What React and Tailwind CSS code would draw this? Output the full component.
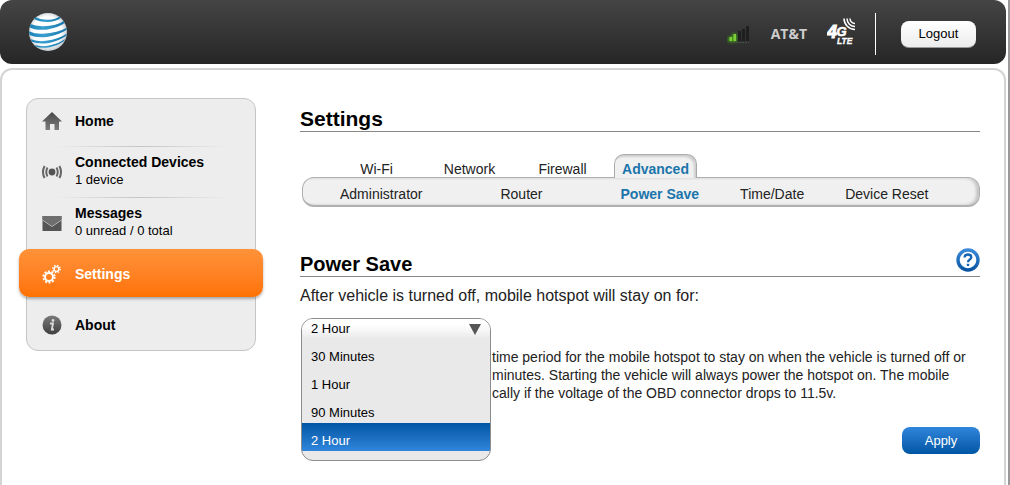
import React, { useState } from 'react';

const mainTabs = ['Wi-Fi', 'Network', 'Firewall', 'Advanced'];

const durations = ['30 Minutes', '1 Hour', '90 Minutes', '2 Hour'];

const Globe = () => (
  <svg width="38" height="38" viewBox="0 0 38 38" aria-hidden="true">
    <defs>
      <radialGradient id="globeFill" cx="48%" cy="48%" r="54%">
        <stop offset="70%" stopColor="#ffffff" />
        <stop offset="100%" stopColor="#bcc4ca" />
      </radialGradient>
      <linearGradient id="globeBand" x1="0" x2="1">
        <stop offset="0" stopColor="#1b7fb5" />
        <stop offset="0.4" stopColor="#3a9fd0" />
        <stop offset="1" stopColor="#1574a8" />
      </linearGradient>
      <clipPath id="globeClip">
        <circle cx="19" cy="19" r="19" />
      </clipPath>
    </defs>
    <circle cx="19" cy="19" r="19" fill="url(#globeFill)" />
    <g clipPath="url(#globeClip)" fill="url(#globeBand)">
      <path d="M6 4Q12 7 19 6.800Q27 6.500 31 3L32.500 4.500Q27 8.800 18 9Q10 9 5 6Z" />
      <path d="M1.500 11Q6 13 13 13.200Q27 13.500 35.500 7.500L36.500 9.500Q29 15 17 16.700Q6 17.500 0 14Z" />
      <path d="M-0.500 18Q6 21.300 14 20.800Q29 20 38 14.500L38 16.500Q30 22 18 24Q7 25.300 0.500 22Z" />
      <path d="M1 26Q8 29 17 27.800Q30 26 38 20.500L37.500 22.500Q30 28 20 30Q10 31.500 3 28.700Z" />
      <path d="M5.500 32Q12 34 20 32.500Q30 30.500 36 26L34.500 28.500Q29 32.500 21 34.200Q13 35.500 8 34Z" />
    </g>
  </svg>
);

const SignalBars = () => (
  <svg width="24" height="20" viewBox="0 0 24 20" aria-hidden="true">
    <defs>
      <filter id="barGlow" x="-60%" y="-60%" width="220%" height="220%">
        <feGaussianBlur stdDeviation="1.500" />
      </filter>
    </defs>
    <path d="M1 17V12H5V9H10V17Z" fill="#3f9a12" filter="url(#barGlow)" />
    <path d="M2.500 16V12H5V16ZM6.500 16V9H9V16Z" fill="#7fcb3a" />
    <path d="M11 16V6H14V16ZM15 16V4H18V16ZM19 16V1H22V16Z" fill="#1f1f1f" />
    <path d="M3 17.500H22" stroke="#465140" strokeDasharray="2 1" />
  </svg>
);

const LteBadge = () => (
  <svg width="30" height="28" viewBox="0 0 30 28" fill="#fff" aria-label="4G LTE">
    <g stroke="#fff" strokeWidth="1.500" fill="none">
      <path d="M17 1.500A11 11 0 0 0 28 12.500" />
      <path d="M20 1.500A8 8 0 0 0 28 9.500" />
      <path d="M23 1.500A5 5 0 0 0 28 6.500" />
    </g>
    <g className="font-['Liberation_Sans',sans-serif] font-bold italic" stroke="#fff">
      <text x="0" y="21" fontSize="18" strokeWidth="1">
        4<tspan x="9.500" y="19" fontSize="13" strokeWidth="0.600">G</tspan>
      </text>
      <text x="10" y="27" fontSize="8.500" strokeWidth="0.300">LTE</text>
    </g>
  </svg>
);

const IconDefs = () => (
  <defs>
    <linearGradient id="menuGray" x1="0" x2="0" y1="0" y2="1">
      <stop offset="0" stopColor="#484848" />
      <stop offset="1" stopColor="#7d7d7d" />
    </linearGradient>
  </defs>
);

const HomeIcon = () => (
  <svg width="20" height="20" viewBox="0 0 20 20" aria-hidden="true">
    <IconDefs />
    <path d="M10 1L20 10.500H17V19H12.500V13H8V19H3.500V10.500H0Z" fill="url(#menuGray)" />
  </svg>
);

const DevicesIcon = () => (
  <svg width="20" height="20" viewBox="0 0 20 20" fill="none" stroke="#666" aria-hidden="true">
    <circle cx="10" cy="10" r="3.400" fill="#555" stroke="none" />
    <path strokeWidth="2" d="M5.500 5.500Q3 10 5.500 14.500M14.500 5.500Q17 10 14.500 14.500" />
    <path strokeWidth="2" d="M2.600 4Q-0.600 10 2.600 16M17.400 4Q20.600 10 17.400 16" />
  </svg>
);

const MailIcon = () => (
  <svg width="20" height="20" viewBox="0 0 20 20" aria-hidden="true">
    <rect x="0.500" y="3" width="19" height="15" rx="0.500" fill="#555" />
    <path d="M0.500 3H19.500V6L10 13L0.500 6Z" fill="#6e6e6e" />
    <path d="M0.500 7L10 13.500L19.500 7" fill="none" stroke="#b8b8b8" />
  </svg>
);

const GearsIcon = () => (
  <svg width="20" height="20" viewBox="0 0 20 20" fill="none" stroke="#fff" aria-hidden="true">
    <circle cx="7" cy="13" r="4" strokeWidth="2" />
    <circle cx="7" cy="13" r="5.700" strokeWidth="1.800" strokeDasharray="2 1.581" />
    <circle cx="14.500" cy="5" r="2.400" strokeWidth="1.400" />
    <circle cx="14.500" cy="5" r="3.700" strokeWidth="1.400" strokeDasharray="1.500 1.406" />
  </svg>
);

const InfoIcon = () => (
  <svg width="20" height="20" viewBox="0 0 20 20" aria-hidden="true">
    <defs>
      <linearGradient id="infoFill" x1="0" x2="0" y1="0" y2="1">
        <stop offset="0" stopColor="#7a7a7a" />
        <stop offset="1" stopColor="#3f3f3f" />
      </linearGradient>
    </defs>
    <circle cx="10" cy="10" r="9.500" fill="url(#infoFill)" />
    <circle cx="11" cy="5.500" r="1.400" fill="#ddd" />
    <path d="M8 8.500H11L9.800 14.500H12" fill="none" stroke="#ddd" strokeWidth="1.800" />
  </svg>
);

const HelpIcon = () => (
  <svg width="24" height="24" viewBox="0 0 24 24" fill="none" aria-hidden="true">
    <defs>
      <linearGradient id="helpRing" x1="0" x2="0" y1="0" y2="1">
        <stop offset="0" stopColor="#3b8ad8" />
        <stop offset="1" stopColor="#0a55a3" />
      </linearGradient>
    </defs>
    <circle cx="12" cy="12" r="10" stroke="url(#helpRing)" strokeWidth="3.400" />
    <path d="M8.500 9.500Q8.700 6.500 12 6.500Q15.300 6.500 15.300 9.200Q15.300 10.800 13.500 11.800Q12 12.700 12 14.300" stroke="#1565b5" strokeWidth="2.300" />
    <path d="M10.800 15.800H13.200V18H10.800Z" fill="#1565b5" />
  </svg>
);

const Divider = () => (
  <div className="mx-7 h-px bg-linear-to-r from-transparent via-[#c4c4c4] to-transparent"></div>
);

const MenuItem = ({ icon, title, detail }) => (
  <a href="#" className="flex h-[50px] items-center gap-[13px] pl-[15px]">
    {icon}
    <span className={`flex flex-col leading-[18px] ${detail ? 'pb-0.5' : ''}`}>
      <span className="text-sm leading-[18px] font-bold">{title}</span>
      {detail && <span className="text-[13px] leading-[18px]">{detail}</span>}
    </span>
  </a>
);

const Header = () => (
  <header className="mr-px flex h-16 items-center rounded-xl bg-linear-to-b from-[#454545] to-[#262626] pr-[30px] pl-[29px]">
    <Globe />
    <div className="mt-1 ml-auto flex items-center">
      <span className="pt-0.5"><SignalBars /></span>
      <span className="ml-5 font-['Open_Sans',sans-serif] text-sm font-bold text-[#ccc]">AT&amp;T</span>
      <span className="mb-1.5 ml-5"><LteBadge /></span>
      <span className="ml-[18px] h-[42px] w-px bg-white"></span>
      <button className="ml-[25px] h-[27px] w-[75px] rounded-lg border-b border-[#999] bg-linear-to-b from-white to-[#ececec] text-[13px] text-black">
        Logout
      </button>
    </div>
  </header>
);

const Sidebar = () => (
  <nav className="w-[230px] shrink-0 rounded-xl border border-[#c4c4c4] bg-[#ededed]">
    <div className="-mt-[3px]">
      <MenuItem icon={<HomeIcon />} title="Home" />
    </div>
    <Divider />
    <MenuItem icon={<DevicesIcon />} title="Connected Devices" detail="1 device" />
    <Divider />
    <MenuItem icon={<MailIcon />} title="Messages" detail="0 unread / 0 total" />
    <a
      href="#"
      className="-mx-2 mt-px mb-[3px] flex h-12 items-center gap-[13px] rounded-[10px] bg-linear-to-b from-[#ff9238] to-[#ff7200] pt-0.5 pl-[23px] text-sm font-bold text-white shadow-[0_2px_3px_rgba(0,0,0,0.3)]"
    >
      <GearsIcon />
      Settings
    </a>
    <MenuItem icon={<InfoIcon />} title="About" />
  </nav>
);

const Tabs = () => (
  <div className="pl-0.5">
    <div className="flex pl-7">
      {mainTabs.map((tab) => (
        <a
          key={tab}
          href="#"
          className={`flex h-6 w-[93px] items-end justify-center text-sm ${
            tab === 'Advanced' ? 'relative font-bold text-[#1a75ab]' : 'text-[#222]'
          }`}
        >
          <span
            className={
              tab === 'Advanced'
                ? '-mb-px flex h-6 items-center rounded-t-[10px] border border-b-0 border-[#aaa] bg-[#f0f0f0] px-[7px] pt-1 shadow-[inset_-2px_2px_2px_rgba(0,0,0,0.14)]'
                : 'leading-4'
            }
          >
            {tab}
          </span>
        </a>
      ))}
    </div>
    <div className="flex h-[30px] items-center rounded-xl border border-b-2 border-[#b0b0b0] bg-[#f0f0f0] pt-1 pl-[37px] text-sm text-[#222] shadow-[inset_-3px_0_3px_rgba(0,0,0,0.18)]">
      <a href="#" className="mr-[78px]">Administrator</a>
      <a href="#" className="mr-[78px]">Router</a>
      <a href="#" className="mr-[41px] font-bold text-[#1a75ab]">Power Save</a>
      <a href="#" className="mr-[41px]">Time/Date</a>
      <a href="#">Device Reset</a>
    </div>
  </div>
);

const DurationSelect = () => {
  const [value, setValue] = useState('2 Hour');

  return (
    <div className="ml-px w-[190px] shrink-0 overflow-hidden rounded-xl border border-[#8c8c8c] bg-[#e9e9e9] pb-[9px] text-[13px] text-black">
      <div className="relative">
        <select
          id="duration"
          value={value}
          onChange={(e) => setValue(e.target.value)}
          className="block h-5 w-full appearance-none bg-linear-to-b from-white from-30% to-[#e9e9e9] pl-[9px] leading-5 outline-none"
        >
          {durations.map((d) => (
            <option key={d}>{d}</option>
          ))}
        </select>
        <svg width="12" height="11" viewBox="0 0 12 11" className="pointer-events-none absolute top-[5px] right-[9px]" aria-hidden="true">
          <path d="M0 0H12L6 11Z" fill="#555" />
        </svg>
      </div>
      <ul>
        {durations.map((d) => (
          <li key={d}>
            <button
              onClick={() => setValue(d)}
              className={`block h-7 w-full pt-2 pl-[9px] text-left leading-5 ${
                d === value ? 'bg-linear-to-b from-[#0056a4] to-[#2f86dc] text-white' : ''
              }`}
            >
              {d}
            </button>
          </li>
        ))}
      </ul>
    </div>
  );
};

const App = () => {
  return (
    <div className="min-h-screen bg-[#999] pr-0.5 font-['Liberation_Sans',Arial,sans-serif] text-black">
      <div className="flex min-h-screen flex-col bg-white pr-px">
        <Header />
        <div className="mt-1 mr-px flex grow items-start gap-11 rounded-t-xl border-2 border-b-0 border-[#d4d4d4] pt-7 pr-6 pl-6">
          <Sidebar />
          <main className="min-w-0 grow">
            <h1 className="mt-2 border-b border-[#888] text-[21px] leading-[25px] font-bold">Settings</h1>
            <div className="mt-[21px]">
              <Tabs />
            </div>

            <div className="mt-[41px] flex items-start justify-between border-b border-[#888]">
              <h2 className="pt-1 text-xl leading-6 font-bold">Power Save</h2>
              <button title="Help"><HelpIcon /></button>
            </div>
            <label htmlFor="duration" className="mt-[9px] block text-base leading-5 text-[#222]">
              After vehicle is turned off, mobile hotspot will stay on for:
            </label>
            <div className="mt-3 flex items-start">
              <DurationSelect />
              <div className="min-w-0 grow pt-[30px] pl-px">
                <p className="text-sm leading-[18px] text-[#222]">
                  time period for the mobile hotspot to stay on when the vehicle is turned off or
                  <br />
                  minutes. Starting the vehicle will always power the hotspot on. The mobile
                  <br />
                  cally if the voltage of the OBD connector drops to 11.5v.
                </p>
                <div className="mt-[25px] flex justify-end">
                  <button className="h-[27px] w-[78px] rounded-lg bg-linear-to-b from-[#2f86dc] to-[#0056a4] text-[13px] text-white">
                    Apply
                  </button>
                </div>
              </div>
            </div>
          </main>
        </div>
      </div>
    </div>
  );
};

export default App;
